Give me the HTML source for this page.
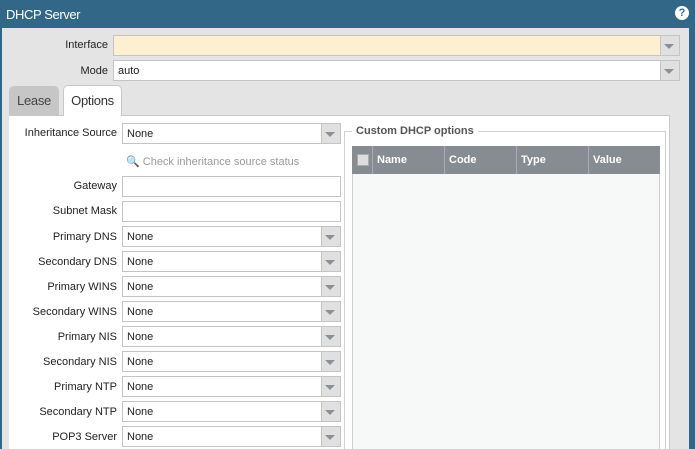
<!DOCTYPE html><html style="overflow:hidden"><head><style>
html,body{overflow:hidden}
body{margin:0;width:695px;height:449px;overflow:hidden;background:#336788;font-family:"Liberation Sans",sans-serif;font-size:11px;color:#222;position:relative}
.t{position:absolute;left:0;top:0;width:695px;height:28px;color:#fff;font-size:13px;line-height:29px;padding-left:6px;box-sizing:border-box;letter-spacing:-0.4px}
.body{position:absolute;left:2px;top:28px;width:687px;height:421px;background:#e4e4e4;overflow:hidden}
.a{position:absolute}
.lab{position:absolute;text-align:right;font-size:11px;margin-top:1px}
.in{position:absolute;background:#fff;border:1px solid #c4c4c4;box-sizing:border-box;height:21px;line-height:21px;padding-left:4px;font-size:11px}
.dd:after{content:"";position:absolute;right:0;top:0;width:18px;height:19px;background:#e0e0e0;border-left:1px solid #c4c4c4}
.dd:before{content:"";position:absolute;right:5px;top:8px;border-left:5px solid transparent;border-right:5px solid transparent;border-top:5px solid #8a9099;z-index:2}
.help{position:absolute;right:6px;top:6px;width:14px;height:14px;border-radius:50%;background:#fff;color:#2e6f9e;font-weight:bold;font-size:11px;text-align:center;line-height:14px}
</style></head><body>
<div class="t">DHCP Server</div>
<div class="help">?</div>
<div class="body">
<div class="lab" style="left:0;width:106px;top:10px">Interface</div>
<div class="in dd" style="left:111px;top:7px;width:567px;background:#fdf0d2"></div>
<div class="lab" style="left:0;width:106px;top:36px">Mode</div>
<div class="in dd" style="left:111px;top:32px;width:567px">auto</div>
<div class="a" style="left:7px;top:58px;width:50px;height:29px;background:#c6c6c6;border-radius:5px 5px 0 0;text-align:center;line-height:29px;font-size:13px;color:#444;letter-spacing:-0.3px">Lease</div>
<div class="a" style="left:61px;top:57px;width:59px;height:31px;background:#fff;border:1px solid #c8c8c8;border-bottom:none;border-radius:5px 5px 0 0;text-align:center;line-height:29px;font-size:13px;color:#333;z-index:2;box-sizing:border-box;letter-spacing:-0.3px">Options</div>
<div class="a" style="left:7px;top:87px;width:660px;height:340px;background:#fff;border-top:1px solid #c8c8c8;border-right:1px solid #c8c8c8"></div>
<div class="lab" style="left:0;width:115px;top:98px">Inheritance Source</div>
<div class="in dd" style="left:120px;top:95px;width:219px">None</div>
<div class="a" style="left:124px;top:127px;color:#999">&#128269; Check inheritance source status</div>
<div class="lab" style="left:0;width:115px;top:151px">Gateway</div>
<div class="in" style="left:120px;top:148px;width:219px"></div>
<div class="lab" style="left:0;width:115px;top:176px">Subnet Mask</div>
<div class="in" style="left:120px;top:173px;width:219px"></div>
<div class="lab" style="left:0;width:115px;top:202px">Primary DNS</div><div class="in dd" style="left:120px;top:198px;width:219px">None</div>
<div class="lab" style="left:0;width:115px;top:227px">Secondary DNS</div><div class="in dd" style="left:120px;top:223px;width:219px">None</div>
<div class="lab" style="left:0;width:115px;top:252px">Primary WINS</div><div class="in dd" style="left:120px;top:248px;width:219px">None</div>
<div class="lab" style="left:0;width:115px;top:277px">Secondary WINS</div><div class="in dd" style="left:120px;top:273px;width:219px">None</div>
<div class="lab" style="left:0;width:115px;top:302px">Primary NIS</div><div class="in dd" style="left:120px;top:298px;width:219px">None</div>
<div class="lab" style="left:0;width:115px;top:327px">Secondary NIS</div><div class="in dd" style="left:120px;top:323px;width:219px">None</div>
<div class="lab" style="left:0;width:115px;top:352px">Primary NTP</div><div class="in dd" style="left:120px;top:348px;width:219px">None</div>
<div class="lab" style="left:0;width:115px;top:377px">Secondary NTP</div><div class="in dd" style="left:120px;top:373px;width:219px">None</div>
<div class="lab" style="left:0;width:115px;top:402px">POP3 Server</div><div class="in dd" style="left:120px;top:398px;width:219px">None</div>
<div class="a" style="left:342px;top:103px;width:322px;height:330px;border:1px solid #d0d0d0;box-sizing:border-box"></div>
<div class="a" style="left:350px;top:97px;background:#fff;padding:0 4px;font-weight:bold;color:#555">Custom DHCP options</div>
<div class="a" style="left:350px;top:118px;width:308px;height:315px;background:#f7f9f8;border:1px solid #d0d0d0;box-sizing:border-box"></div>
<div class="a" style="left:350px;top:118px;width:308px;height:28px;background:#868c92;color:#fff;font-weight:bold;line-height:29px">
<div class="a" style="left:5px;top:8px;width:10px;height:10px;background:#ddd;border:1px solid #aaa"></div>
<div class="a" style="left:20px;top:0;height:28px;border-left:1px solid #aab"></div>
<div class="a" style="left:25px">Name</div>
<div class="a" style="left:92px;top:0;height:28px;border-left:1px solid #aab"></div>
<div class="a" style="left:97px">Code</div>
<div class="a" style="left:164px;top:0;height:28px;border-left:1px solid #aab"></div>
<div class="a" style="left:169px">Type</div>
<div class="a" style="left:236px;top:0;height:28px;border-left:1px solid #aab"></div>
<div class="a" style="left:241px">Value</div>
</div>
</div>
</body></html>
